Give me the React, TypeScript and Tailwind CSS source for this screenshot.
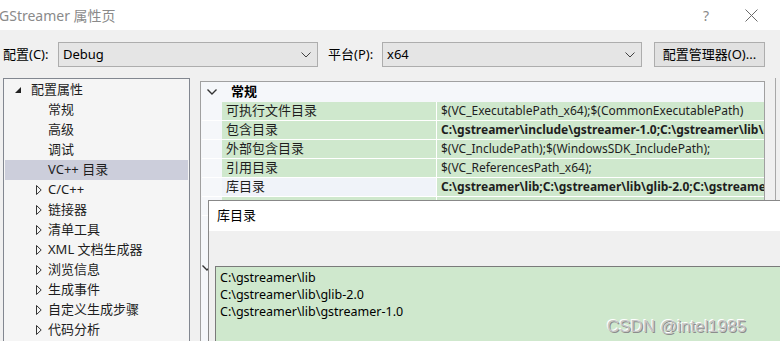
import React from "react";

const F = "font-['Noto_Sans','Noto_Sans_CJK_SC',sans-serif]";

function Chevron() {
  return (
    <svg width="10" height="6" viewBox="0 0 10 6" className="shrink-0">
      <path d="M0.5 0.5 L5 5 L9.5 0.5" fill="none" stroke="#404040" strokeWidth="1" />
    </svg>
  );
}

function Combo({ value, w }: { value: string; w: string }) {
  return (
    <div className={`${w} h-[25px] bg-[#e5e5e5] border border-[#adadad] flex items-center pl-[4px] pr-[6px] justify-between`}>
      <span className="text-[13px] text-black">{value}</span>
      <Chevron />
    </div>
  );
}

function Closed() {
  return (
    <svg width="6" height="10" viewBox="0 0 6 10" className="shrink-0">
      <path d="M0.5 0.5 L5.2 5 L0.5 9.5 Z" fill="none" stroke="#333" strokeWidth="1" />
    </svg>
  );
}

const treeChildren = ["常规", "高级", "调试", "VC++ 目录"];
const treeGroups = ["C/C++", "链接器", "清单工具", "XML 文档生成器", "浏览信息", "生成事件", "自定义生成步骤", "代码分析"];

const rows: { name: string; value: string; bold?: boolean; sel?: boolean }[] = [
  { name: "可执行文件目录", value: "$(VC_ExecutablePath_x64);$(CommonExecutablePath)" },
  { name: "包含目录", value: "C:\\gstreamer\\include\\gstreamer-1.0;C:\\gstreamer\\lib\\glib-2.0\\include;C:\\gstreamer\\include\\glib-2.0", bold: true },
  { name: "外部包含目录", value: "$(VC_IncludePath);$(WindowsSDK_IncludePath);" },
  { name: "引用目录", value: "$(VC_ReferencesPath_x64);" },
  { name: "库目录", value: "C:\\gstreamer\\lib;C:\\gstreamer\\lib\\glib-2.0;C:\\gstreamer\\lib\\gstreamer-1.0", bold: true, sel: true },
  { name: "", value: "" },
];

export default function App() {
  return (
    <div className={`${F} relative w-[780px] h-[341px] overflow-hidden bg-[#f0f0f0] text-[12px] text-[#1e1e1e]`}>
      {/* title bar */}
      <div className="h-[30px] bg-white flex items-center justify-between">
        <span className="text-[14px] text-[#8a8a8a] -ml-[1px]">GStreamer 属性页</span>
        <div className="flex items-center">
          <span className="text-[14px] text-[#8a8a8a] mr-[36px]">?</span>
          <svg width="13" height="13" viewBox="0 0 13 13" className="mr-[22px]">
            <path d="M0.5 0.5 L12.5 12.5 M12.5 0.5 L0.5 12.5" stroke="#6a6a6a" strokeWidth="1" />
          </svg>
        </div>
      </div>

      {/* config row */}
      <div className="flex items-center mt-[12px] h-[25px]">
        <span className="text-[13px] text-black ml-[3px] w-[55px]">配置(C):</span>
        <Combo value="Debug" w="w-[260px]" />
        <span className="text-[13px] text-black ml-[10px] w-[54px]">平台(P):</span>
        <Combo value="x64" w="w-[260px]" />
        <div className="ml-[12px] w-[111px] h-[25px] bg-[#e1e1e1] border border-[#adadad] flex items-center justify-center text-[13px] text-black">
          配置管理器(O)...
        </div>
      </div>

      {/* main */}
      <div className="flex mt-[11px]">
        {/* tree */}
        <div className="ml-[3px] w-[187px] h-[300px] border border-[#828790] bg-[#f5f5f5] p-[1px] text-[13px] text-[#1e1e1e]">
          <div className="h-[20px] flex items-center">
            <svg width="6" height="6" viewBox="0 0 6 6" className="ml-[10px] mr-[10px]">
              <path d="M6 0 L6 6 L0 6 Z" fill="#222" />
            </svg>
            <span>配置属性</span>
          </div>
          {treeChildren.map((t, i) => (
            <div key={t} className={`h-[20px] flex items-center pl-[43px] ${i === 3 ? "bg-[#cccedb]" : ""}`}>
              {t}
            </div>
          ))}
          {treeGroups.map((t) => (
            <div key={t} className="h-[20px] flex items-center pl-[31px]">
              <Closed />
              <span className="ml-[6px]">{t}</span>
            </div>
          ))}
        </div>

        {/* property grid */}
        <div className="ml-[10px] mt-[3px] w-[565px] h-[300px] border border-[#a0a0a0] bg-[#f5f7fa] pl-[1px]">
          <div className="h-[20px] flex items-center">
            <svg width="10" height="6" viewBox="0 0 10 6" className="ml-[5px] mr-[14px]">
              <path d="M0.5 0.5 L5 5 L9.5 0.5" fill="none" stroke="#333" strokeWidth="1.4" />
            </svg>
            <span className="font-bold text-[13px] text-black">常规</span>
          </div>
          {rows.map((r, i) => (
            <div key={i} className="h-[19px] flex pl-[20px] border-b border-white">
              <div className={`w-[215px] shrink-0 flex items-center pl-[4px] text-[13px] border-r border-white ${r.sel ? "bg-[#f0f3f9]" : "bg-[#cfe8cd]"}`}>
                {r.name}
              </div>
              <div className={`flex-1 min-w-0 bg-[#cfe8cd] flex items-center pl-[4px] overflow-hidden whitespace-nowrap text-[12px] ${r.bold ? "font-bold" : ""}`}>
                {r.value}
              </div>
            </div>
          ))}
          <div className="h-[20px] flex items-center mt-[42px]">
            <svg width="10" height="6" viewBox="0 0 10 6">
              <path d="M0.5 0.5 L5 5 L9.5 0.5" fill="none" stroke="#333" strokeWidth="1.4" />
            </svg>
          </div>
        </div>
        <div className="ml-[10px] w-[1px] h-[130px] bg-[#a8a8a8]" />
      </div>

      {/* popup dialog (overlay) */}
      <div className="absolute left-[208px] top-[200px] w-[600px] h-[160px] border border-[#888] bg-[#f0f0f0]">
        <div className="h-[30px] bg-white flex items-center pl-[8px] text-[13px] text-black">库目录</div>
        <div className="h-[35px]" />
        <div className="ml-[6px] border-t border-l border-[#7a7a7a] bg-[#cfe8cd] h-[100px] pt-[2px] pl-[4px] text-[12.5px] leading-[17px] text-black">
          <div>C:\gstreamer\lib</div>
          <div>C:\gstreamer\lib\glib-2.0</div>
          <div>C:\gstreamer\lib\gstreamer-1.0</div>
        </div>
      </div>

      {/* watermark */}
      <div className="absolute left-[607px] top-[314px] font-['Liberation_Sans',sans-serif] text-[17px] text-[#c6c6c6] [text-shadow:1px_1px_0_#8c8c8c,-1px_-1px_0_#ffffff]">
        CSDN @intel1985
      </div>
    </div>
  );
}
